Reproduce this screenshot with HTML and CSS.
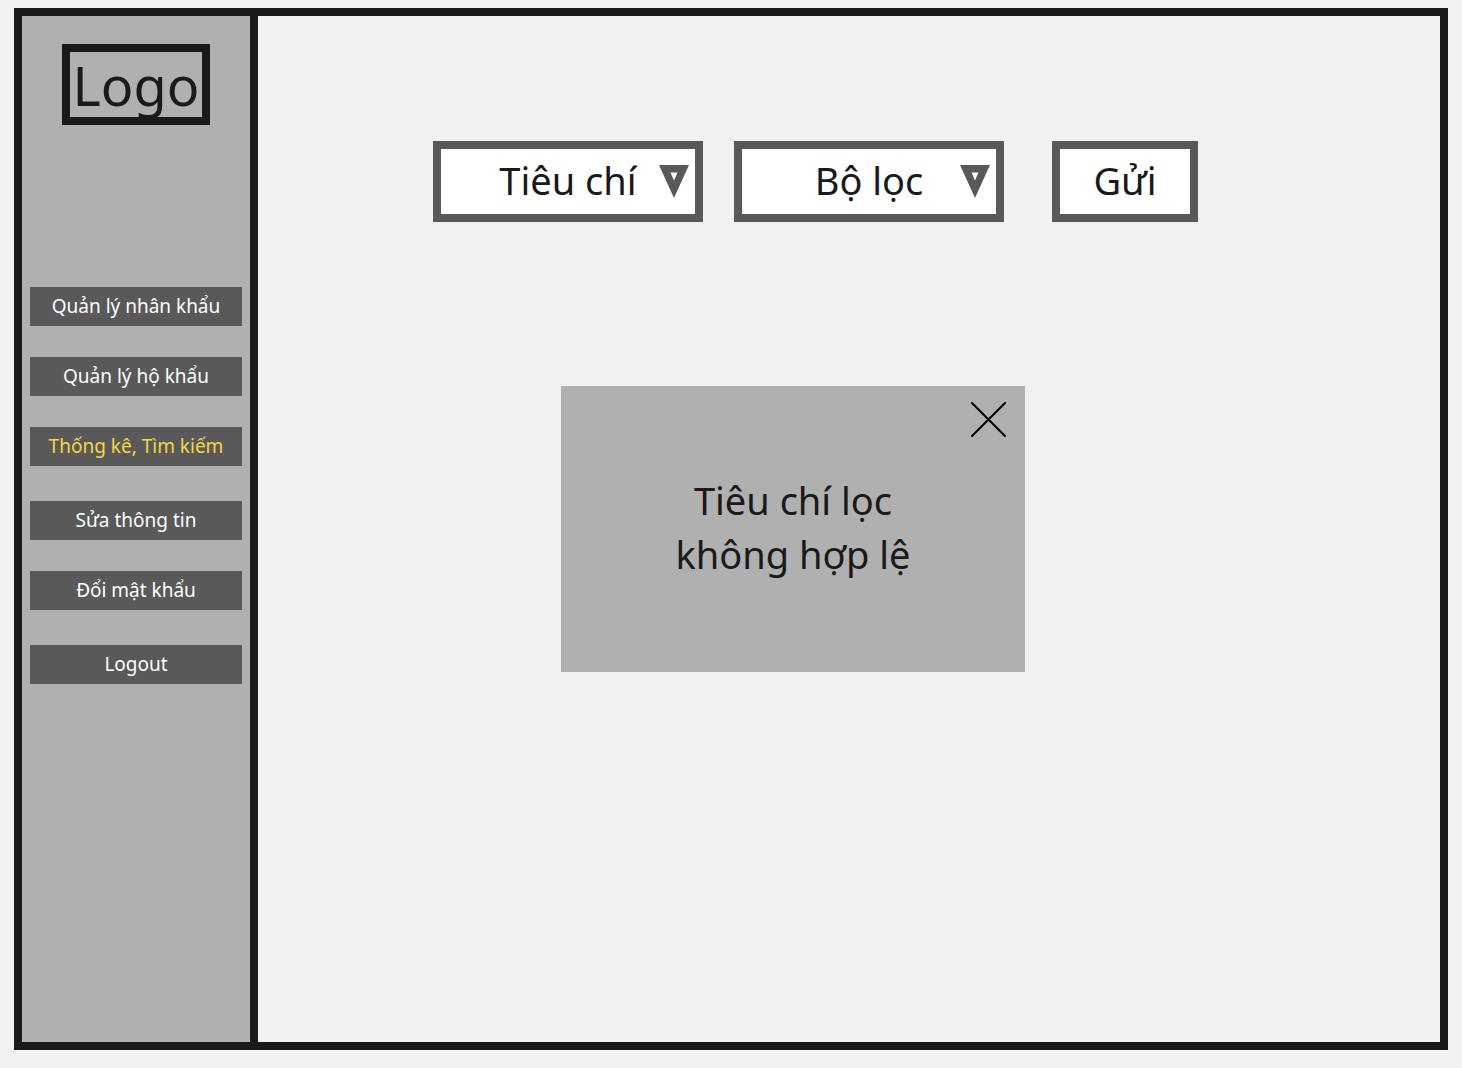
FILE: index.html
```html
<!DOCTYPE html>
<html lang="vi">
<head>
<meta charset="utf-8">
<meta name="viewport" content="width=device-width, initial-scale=1">
<title>Thống kê, Tìm kiếm</title>
<link rel="stylesheet" href="styles.css">
</head>
<body>
<div class="frame">
  <aside class="sidebar">
    <div class="logo">Logo</div>
    <nav class="menu">
      <div class="menu-group">
        <button type="button" class="menu-item">Quản lý nhân khẩu</button>
        <button type="button" class="menu-item">Quản lý hộ khẩu</button>
        <button type="button" class="menu-item menu-item-active" aria-current="page">Thống kê, Tìm kiếm</button>
      </div>
      <div class="menu-group">
        <button type="button" class="menu-item">Sửa thông tin</button>
        <button type="button" class="menu-item">Đổi mật khẩu</button>
      </div>
      <div class="menu-group">
        <button type="button" class="menu-item">Logout</button>
      </div>
    </nav>
  </aside>
  <main class="content">
    <form class="filters">
      <div class="filter-fields">
        <div class="picker">
          <select class="control picker-select" aria-label="Tiêu chí"><option>Tiêu chí</option></select>
          <svg class="picker-arrow" viewBox="0 0 32 34" aria-hidden="true"><path fill="#595959" fill-rule="evenodd" d="M1 0H31L16 33ZM12.5 7.5H19.5L16 15.5Z"/></svg>
        </div>
        <div class="picker">
          <select class="control picker-select" aria-label="Bộ lọc"><option>Bộ lọc</option></select>
          <svg class="picker-arrow" viewBox="0 0 32 34" aria-hidden="true"><path fill="#595959" fill-rule="evenodd" d="M1 0H31L16 33ZM12.5 7.5H19.5L16 15.5Z"/></svg>
        </div>
      </div>
      <button type="button" class="control submit">Gửi</button>
    </form>
    <section class="notice" role="alertdialog" aria-labelledby="notice-text">
      <button type="button" class="notice-close" aria-label="Close">
        <svg class="notice-cross" viewBox="0 0 36 36" aria-hidden="true"><path stroke="#000" stroke-width="2" stroke-linecap="round" d="M2 1L35 34M35 1L2 34"/></svg>
      </button>
      <p class="notice-text" id="notice-text">Tiêu chí lọc<br>không hợp lệ</p>
    </section>
  </main>
</div>
</body>
</html>
```
FILE: styles.css
```css
* {
  box-sizing: border-box;
}

body {
  margin: 0;
  padding: 8px 14px 18px;
  min-height: 100vh;
  display: flex;
  background: #f1f1f1;
  color: #1a1a1a;
  font-family: "Noto Sans", sans-serif;
}

button,
select {
  margin: 0;
  padding: 0;
  font-family: inherit;
  cursor: pointer;
}

.frame {
  flex: 1;
  display: flex;
  border: 8px solid #1a1a1a;
}

.sidebar {
  flex: none;
  width: 236px;
  padding: 28px 8px;
  background: #b0b0b0;
  border-right: 8px solid #1a1a1a;
}

.logo {
  width: 148px;
  height: 81px;
  margin: 0 auto 162px;
  border: 8px solid #1a1a1a;
  font-size: 54px;
  line-height: 66px;
  text-align: center;
}

.menu {
  display: flex;
  flex-direction: column;
  gap: 35px;
}

.menu-group {
  display: flex;
  flex-direction: column;
  gap: 31px;
}

.menu-item {
  height: 39px;
  border: 0;
  background: #595959;
  color: #fff;
  font-size: 19px;
  line-height: 39px;
}

.menu-item-active {
  color: #f5d547;
}

.content {
  flex: 1;
  padding: 125px 48px 48px 175px;
}

.filters {
  display: flex;
  flex-wrap: wrap;
  gap: 32px 48px;
}

.filter-fields {
  display: flex;
  flex-wrap: wrap;
  gap: 31px;
}

.control {
  height: 81px;
  padding-bottom: 4px;
  border: 8px solid #595959;
  border-radius: 0;
  background: #fff;
  color: #1a1a1a;
  font-size: 38px;
  line-height: 54px;
}

.picker {
  position: relative;
  width: 270px;
}

.picker-select {
  width: 100%;
  appearance: none;
  text-align: center;
  text-align-last: center;
}

.picker-arrow {
  position: absolute;
  top: 24px;
  right: 13px;
  width: 32px;
  height: 34px;
  pointer-events: none;
}

.submit {
  width: 146px;
}

.notice {
  display: flex;
  flex-direction: column;
  width: 464px;
  max-width: 100%;
  min-height: 286px;
  margin: 164px 0 0 128px;
  padding: 16px 19px;
  background: #b0b0b0;
}

.notice-close {
  align-self: flex-end;
  width: 36px;
  height: 36px;
  border: 0;
  background: none;
}

.notice-cross {
  display: block;
  width: 36px;
  height: 36px;
}

.notice-text {
  margin: 35px 0;
  font-size: 38px;
  line-height: 54px;
  text-align: center;
}
```
